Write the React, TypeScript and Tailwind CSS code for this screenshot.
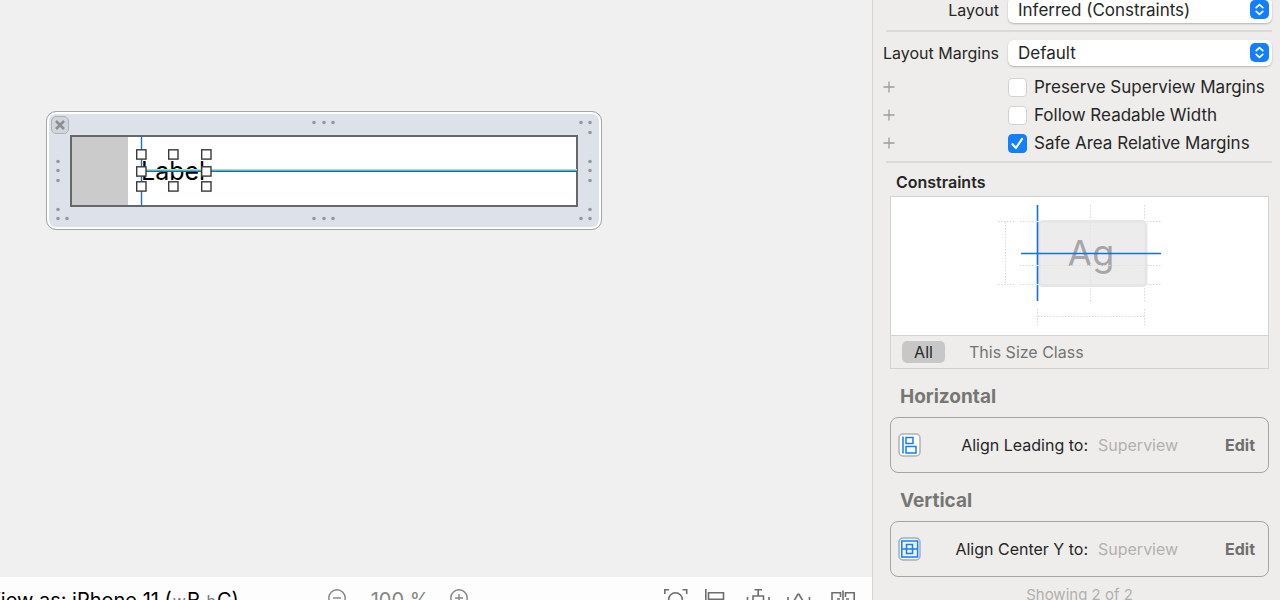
import { useState, type ReactNode } from "react";

const DOTS = [
  [268, 11], [278, 11], [287, 11],
  [268, 107], [278, 107], [287, 107],
  [535, 11], [544, 11], [544, 21],
  [535, 107], [544, 107], [544, 98],
  [12, 107], [21, 107], [12, 98],
  [12, 50], [12, 59], [12, 69],
  [544, 50], [544, 59], [544, 69],
];

const HANDLES = [
  [95, 43], [127, 43], [160, 43],
  [95, 60], [160, 60],
  [95, 75], [127, 75], [160, 75],
];

function CellEditor() {
  return (
    <div className="relative h-[119px] w-[556px] rounded-[10px] border border-[#a4a6a9] bg-[#dde1e9] p-[23px] shadow-[inset_0_0_0_2px_#fff]">
      <button aria-label="Close" className="absolute left-1 top-1 grid h-[18px] w-[18px] place-items-center rounded-[5px] border border-[#aeb2b8] bg-[#d2d5da]">
        <svg width="10" height="10" viewBox="0 0 10 10" stroke="#8b8e93" strokeWidth="2.6">
          <path d="M1 1l8 8M9 1l-8 8" />
        </svg>
      </button>
      <div className="flex h-[72px] items-center border-2 border-[#66676b] bg-white">
        <div className="h-full w-14 bg-[#cbcbcb]" />
        <span className="pl-[13px] text-[25px] leading-8 text-black">Label</span>
      </div>
      {/* guides, resize handles and grip dots */}
      <svg className="pointer-events-none absolute -left-px -top-px" width="556" height="119" viewBox="0 0 556 119" fill="none">
        <path d="M95.5 25v70" stroke="#1b6fd0" strokeWidth="1.4" />
        <rect x="98" y="58" width="433" height="1" fill="#a5e3c4" />
        <rect x="98" y="59" width="433" height="1" fill="#58b5b8" />
        <rect x="98" y="60" width="433" height="1" fill="#1b6da8" />
        {DOTS.map(([x, y]) => (
          <circle key={`${x}-${y}`} cx={x} cy={y + 0.5} r="1.8" fill="#94989f" />
        ))}
        {HANDLES.map(([x, y]) => (
          <rect key={`${x}-${y}`} x={x - 4.3} y={y - 4.2} width="9.3" height="9.3" fill="#fff" stroke="#3a3a3a" strokeWidth="1.4" />
        ))}
      </svg>
    </div>
  );
}

function Tool({ label, children }: { label: string; children: ReactNode }) {
  return (
    <button aria-label={label}>
      <svg className="overflow-visible" width="24" height="24" viewBox="0 0 24 24" fill="none" stroke="#6e6e6e" strokeWidth="1.6">
        {children}
      </svg>
    </button>
  );
}

function BottomBar() {
  return (
    <footer className="h-[23px] shrink-0 overflow-hidden bg-[#fdfdfd]">
      <div className="flex h-[46px] items-center pr-[17px]">
        <div className="-ml-[13px] w-[341px] shrink-0 whitespace-nowrap text-[20px] text-black">
          View as: iPhone 11 (<span className="px-px text-[16px] text-[#777]">w</span>R <span className="px-px text-[16px] text-[#777]">h</span>C)
        </div>
        <div className="flex items-center text-[#858585]">
          <button aria-label="Zoom out">
            <svg width="18" height="24" viewBox="0 0 18 24" fill="none" stroke="currentColor" strokeWidth="1.4">
              <circle cx="9" cy="10" r="8.2" />
              <path d="M5 10h8" />
            </svg>
          </button>
          <span className="w-[104px] whitespace-nowrap pl-1 text-center text-[20px]">100 %</span>
          <button aria-label="Zoom in">
            <svg width="18" height="24" viewBox="0 0 18 24" fill="none" stroke="currentColor" strokeWidth="1.4">
              <circle cx="9" cy="10" r="8.2" />
              <path d="M5 10h8M9 6v8" />
            </svg>
          </button>
        </div>
        <div className="ml-auto flex gap-[18px]">
          <Tool label="Update frames">
            <path d="M1.800 6V1.800H6M19.500 1.800H23.700V6M1.800 16v4.200H6M19.500 20.200H23.700V16" />
            <circle cx="12.500" cy="11.500" r="6.800" />
          </Tool>
          <Tool label="Align">
            <path d="M.800 1v21M3.500 4.800h15v6.400h-15zM3.500 14.500h10v6h-10z" />
          </Tool>
          <Tool label="Add constraints">
            <path d="M7.500 1.800h7.500M11.200 1.800v6M6 8h10.500v9H6zM.500 9v8M22 9v8" />
          </Tool>
          <Tool label="Resolve issues">
            <path d="M-1 9v8M20.500 9v8M3.500 15.500l5.200-9q.700-1 1.400 0L15.500 15.500" />
          </Tool>
          <Tool label="Embed in">
            <path d="M9.500 9V4.800H1v14h8.500v-4M14.500 9V4.800h8.700v14h-8.700v-4M12 2.500v18M6 11h3M15 11h3" />
          </Tool>
        </div>
      </div>
    </footer>
  );
}

function PopUp({ id, value }: { id: string; value: string }) {
  return (
    <div className="relative">
      <select id={id} className="block h-[26px] w-full appearance-none rounded-md bg-white pl-[10px] pr-8 pt-px text-[17px] leading-[25px] text-[#262626] shadow-[0_1px_2px_rgba(0,0,0,0.25)]">
        <option>{value}</option>
      </select>
      <svg className="pointer-events-none absolute right-[3px] top-[3px]" width="19" height="19" viewBox="0 0 19 19" fill="none">
        <rect width="19" height="19" rx="5" fill="#157efb" />
        <path d="M6.200 7.700L9.500 4.600L12.800 7.700M6.200 11.300L9.500 14.400L12.800 11.300" stroke="#fff" strokeWidth="1.700" strokeLinecap="round" strokeLinejoin="round" />
      </svg>
    </div>
  );
}

function CheckRow({ label, initial = false }: { label: string; initial?: boolean }) {
  const [on, setOn] = useState(initial);
  return (
    <div className="grid grid-cols-[116px_1fr] items-center gap-[9px]">
      <button aria-label={`Add variation for ${label}`} className="w-3">
        <svg width="12" height="12" viewBox="0 0 12 12" stroke="#9c9c9c" strokeWidth="1.300">
          <path d="M6 .500v11M.500 6h11" />
        </svg>
      </button>
      <label className="flex items-center gap-[7px] whitespace-nowrap text-[17px] leading-6">
        <span className="relative block h-[19px] w-[19px] shrink-0">
          <input
            type="checkbox"
            checked={on}
            onChange={(e) => setOn(e.target.checked)}
            className="block h-[19px] w-[19px] appearance-none rounded-[4px] border border-[#d3d2d0] bg-white checked:border-[#157efb] checked:bg-[#157efb]"
          />
          {on && (
            <svg className="pointer-events-none absolute inset-0" width="19" height="19" viewBox="0 0 19 19" fill="none">
              <path d="M4.500 10.200L8 14L14 5" stroke="#fff" strokeWidth="2.200" strokeLinecap="round" strokeLinejoin="round" />
            </svg>
          )}
        </span>
        {label}
      </label>
    </div>
  );
}

function ConstraintsDiagram() {
  return (
    <svg width="160" height="138" viewBox="0 0 160 138" fill="none" className="overflow-visible">
      <rect x="39" y="24.500" width="107" height="64" rx="4" fill="#ececec" stroke="#e6e6e6" strokeWidth="3" />
      <text x="91" y="69" textAnchor="middle" fontSize="36" fill="#a6a6a6">Ag</text>
      <g stroke="#d8d8d8" strokeDasharray="1.500 1.500">
        <path d="M-2 24.500h16M-2 87.500h16M5.500 25v62M20 24.500h16M20 68.500h16M20 87.500h16M147 24.500h15M147 68.500h15M147 87.500h15" />
        <path d="M90.500 8v14M90.500 91v14M144.500 8v14M144.500 91v14M37.500 112v16M144.500 112v16M38 119.500h106" />
        <path d="M40 68.500h106M90.500 25v62" stroke="#e2e2e2" />
      </g>
      <path d="M37.500 8v96" stroke="#0f6ff0" strokeWidth="1.600" />
      <path d="M36 24.500h3M36 68.500h3M36 87.500h3" stroke="#fff" />
      <path d="M21 56.500h140" stroke="#0f6ff0" strokeWidth="1.600" />
    </svg>
  );
}

function ConstraintCard({ label, icon }: { label: string; icon: ReactNode }) {
  return (
    <div className="flex h-14 items-center rounded-lg border border-[#a6a5a4] pb-px pl-[7px] pr-[13px]">
      <svg className="shrink-0" width="23" height="24" viewBox="0 0 23 24" fill="none" stroke="#1b7cf2" strokeWidth="1.500">
        {icon}
      </svg>
      <span className="w-[167px] whitespace-nowrap text-right text-[16px] leading-6">{label}</span>
      <span className="pl-[10px] text-[16px] leading-6 text-[#b2b1b0]">Superview</span>
      <button className="ml-auto text-[16px] font-bold leading-6 text-[#6f6f6f]">Edit</button>
    </div>
  );
}

function Inspector() {
  return (
    <aside className="w-[408px] shrink-0 overflow-hidden border-l border-[#d6d5d4] bg-[#eeedeb] text-[#262626]">
      <div className="-mt-[3px]">
        <div className="pl-[10px] pr-2">
          <div className="grid grid-cols-[116px_1fr] items-center gap-[9px]">
            <label htmlFor="layout" className="whitespace-nowrap text-right text-[16px] leading-6">Layout</label>
            <PopUp id="layout" value="Inferred (Constraints)" />
          </div>
        </div>
        <hr className="ml-[13px] mr-2 mt-[7px] border-t-2 border-[#dbdad9]" />
        <div className="pl-[10px] pr-2 pt-2">
          <div className="mb-[9px] grid grid-cols-[116px_1fr] items-center gap-[9px]">
            <label htmlFor="margins" className="whitespace-nowrap text-right text-[16px] leading-6">Layout Margins</label>
            <PopUp id="margins" value="Default" />
          </div>
          <div className="flex flex-col gap-1">
            <CheckRow label="Preserve Superview Margins" />
            <CheckRow label="Follow Readable Width" />
            <CheckRow label="Safe Area Relative Margins" initial />
          </div>
        </div>
        <hr className="ml-[13px] mr-2 mt-[6px] border-t-2 border-[#dbdad9]" />

        <div className="ml-[17px] mr-[11px]">
          <h2 className="mb-[2px] mt-[7px] pl-[6px] text-[16px] font-semibold leading-6">Constraints</h2>
          <div className="border border-[#d3d2d1]">
            <div className="flex justify-center bg-white">
              <ConstraintsDiagram />
            </div>
            <div className="flex h-[33px] items-center border-t border-[#d3d2d1] pb-px pl-[11px]">
              <button className="h-[22px] w-[43px] rounded-[5px] bg-[#c8c7c7] text-[16px] leading-[22px]">All</button>
              <button className="ml-6 text-[16px] leading-6 text-[#747473]">This Size Class</button>
            </div>
          </div>

          <h3 className="mb-[7px] mt-[15px] pl-[10px] text-[19px] font-bold leading-[26px] text-[#767675]">Horizontal</h3>
          <ConstraintCard
            label="Align Leading to:"
            icon={
              <>
                <rect x="1" y="1" width="21" height="22" rx="4" fill="#fff" stroke="#adb2b8" />
                <path d="M5 3.500v17M8 4.500h7v6H8zM8 13.500h10v6.500H8z" />
              </>
            }
          />
          <h3 className="mb-[7px] mt-[15px] pl-[10px] text-[19px] font-bold leading-[26px] text-[#767675]">Vertical</h3>
          <ConstraintCard
            label="Align Center Y to:"
            icon={
              <>
                <rect x="1" y="1" width="21" height="22" rx="4" fill="#eef5fd" stroke="#9fb0c2" />
                <path d="M3.800 4h15.800v16H3.800zM8.500 7.500h6v9h-6zM4 12h15.500" />
              </>
            }
          />
          <p className="mt-[6px] text-center text-[15px] leading-6 text-[#b2b1b0]">Showing 2 of 2</p>
        </div>
      </div>
    </aside>
  );
}

export default function App() {
  return (
    <div className="flex h-screen overflow-hidden bg-[#f0f0f0] font-['Inter',sans-serif]">
      <main className="flex min-w-0 flex-1 flex-col">
        <div className="min-h-0 flex-1 overflow-hidden pl-[46px] pt-[111px]">
          <CellEditor />
        </div>
        <BottomBar />
      </main>
      <Inspector />
    </div>
  );
}
